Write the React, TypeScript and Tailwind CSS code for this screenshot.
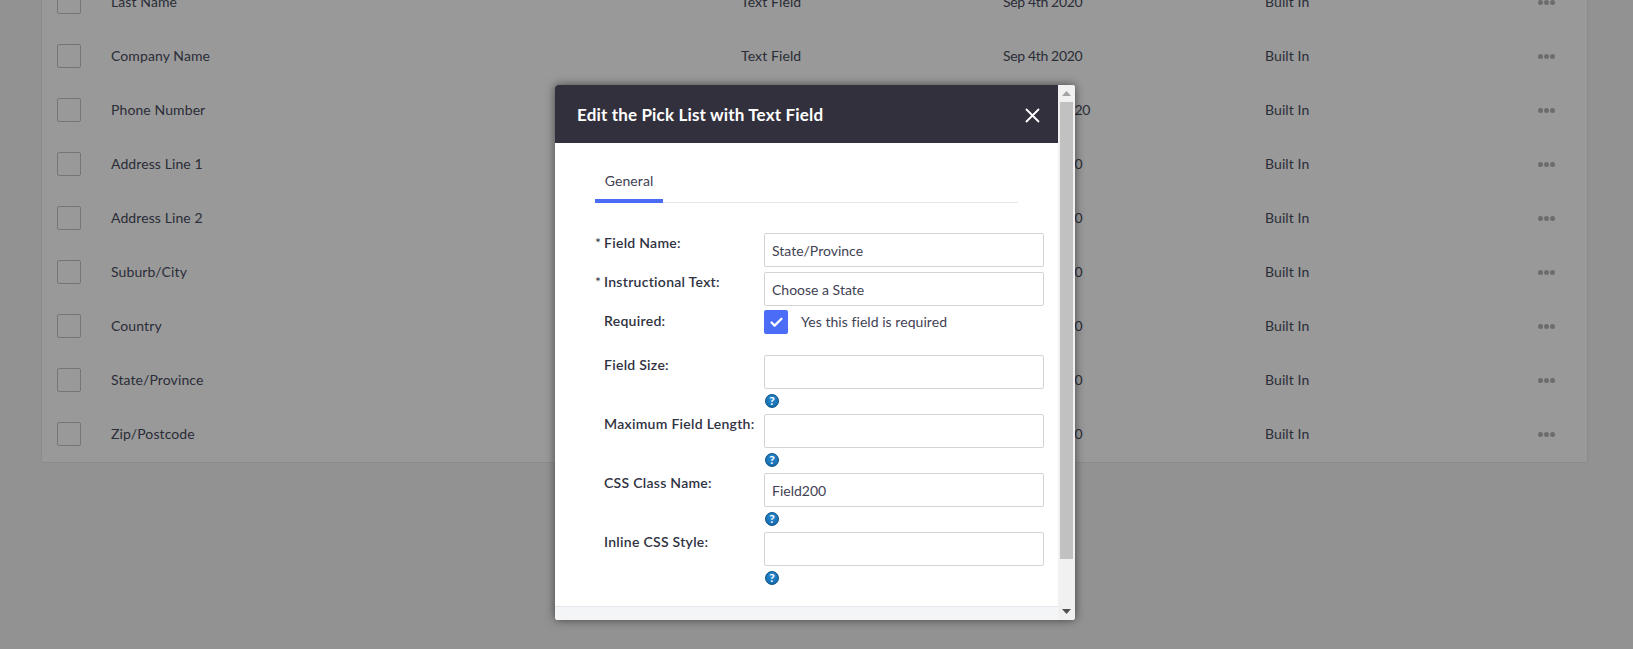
import { Check } from "lucide-react"

const rows = [
  { name: "Last Name", date: "Sep 4th 2020" },
  { name: "Company Name", date: "Sep 4th 2020" },
  { name: "Phone Number", date: "Sep 14th 2020" },
  { name: "Address Line 1", date: "Sep 4th 2020" },
  { name: "Address Line 2", date: "Sep 4th 2020" },
  { name: "Suburb/City", date: "Sep 4th 2020" },
  { name: "Country", date: "Sep 4th 2020" },
  { name: "State/Province", date: "Sep 4th 2020" },
  { name: "Zip/Postcode", date: "Sep 4th 2020" },
]

function TableRow({ name, date }: { name: string; date: string }) {
  return (
    <div className="grid h-[54px] grid-cols-[54px_630px_262px_262px_273px_1fr] items-center pl-[15px] text-[14px] tracking-[0.1px] text-[#484c5e]">
      <span className="h-6 w-6 rounded-[2px] border border-[#c4c4c8] bg-white" />
      <span className="pb-[2px]">{name}</span>
      <span className="pb-[2px]">Text Field</span>
      <span className="pb-[2px] tracking-[-0.35px]">{date}</span>
      <span className="pb-[2px]">Built In</span>
      <span className="flex gap-[1px]">
        <i className="h-[5px] w-[5px] rounded-full bg-[#b5b5b5]" />
        <i className="h-[5px] w-[5px] rounded-full bg-[#b5b5b5]" />
        <i className="h-[5px] w-[5px] rounded-full bg-[#b5b5b5]" />
      </span>
    </div>
  )
}

function Help() {
  return (
    <span className="mt-[5px] ml-px flex h-[14px] w-[14px] items-center justify-center rounded-full border border-[#0a5288] bg-[radial-gradient(circle_at_50%_35%,#2f8fd6,#0a5f9f)] text-[12px] leading-none font-bold text-white">
      ?
    </span>
  )
}

function Label({ text, star, offset }: { text: string; star?: boolean; offset?: string }) {
  return (
    <label className={`flex w-[169px] shrink-0 text-[14px] leading-5 font-semibold tracking-[0.28px] text-[#2f3242] ${offset ?? ""}`}>
      <span className="w-[9px] shrink-0 font-normal">{star ? "*" : ""}</span>
      {text}
    </label>
  )
}

function TextInput({ value }: { value?: string }) {
  return (
    <input
      readOnly
      defaultValue={value}
      className="block h-[34px] w-[280px] rounded-[2px] border border-[#d4d4d4] bg-white px-[7px] pt-px text-[14px] text-[#3f4254] outline-none"
    />
  )
}

function HelpField({ label, value }: { label: string; value?: string }) {
  return (
    <div className="flex">
      <Label text={label} />
      <div className="flex flex-col">
        <TextInput value={value} />
        <Help />
      </div>
    </div>
  )
}

function Scrollbar() {
  return (
    <div className="flex w-[17px] shrink-0 flex-col bg-[#f1f1f1]">
      <div className="flex h-[17px] items-center justify-center">
        <svg width="9" height="5" viewBox="0 0 9 5">
          <path d="M4.5 0L9 5H0z" fill="#a3a3a3" />
        </svg>
      </div>
      <div className="mx-[2px] h-[457px] bg-[#c1c1c1]" />
      <div className="flex-1" />
      <div className="flex h-[17px] items-center justify-center">
        <svg width="9" height="5" viewBox="0 0 9 5">
          <path d="M0 0h9L4.5 5z" fill="#505050" />
        </svg>
      </div>
    </div>
  )
}

export default function App() {
  return (
    <div className="relative h-[649px] overflow-hidden bg-[#f4f4f4] font-['Lato',sans-serif]">
      <div className="mx-[41px] mt-[-26px] w-[1547px] rounded-[2px] border border-[#e8e8ea] bg-white pb-px">
        {rows.map((r) => (
          <TableRow key={r.name} name={r.name} date={r.date} />
        ))}
      </div>

      {/* backdrop + modal */}
      <div className="absolute inset-0 bg-black/40">
        <div className="absolute top-[85px] left-[555px] flex h-[535px] w-[520px] overflow-hidden rounded-[3px] bg-white shadow-[0_0_10px_rgba(0,0,0,0.55)]">
          <div className="flex w-[503px] flex-col">
            <div className="flex h-[58px] shrink-0 items-center justify-between bg-[#33303e] pr-[18px] pl-[22px]">
              <h2 className="mt-px text-[17px] font-bold tracking-[0.16px] text-white">Edit the Pick List with Text Field</h2>
              <svg width="15" height="15" viewBox="0 0 15 15" className="mt-[2px]">
                <path d="M1 1l13 13M14 1L1 14" stroke="#fff" strokeWidth="1.8" />
              </svg>
            </div>

            <div className="flex-1 pl-[40px]">
              <div className="mt-[28px] w-[423px] border-b border-[#e4e6ee]">
                <div className="-mb-px w-[68px] border-b-4 border-[#4a6cf7] pb-[8px] text-center text-[14px] leading-5 tracking-[0.1px] text-[#3f4254]">
                  General
                </div>
              </div>

              <div className="mt-[30px] flex flex-col">
                <div className="flex">
                  <Label text="Field Name:" star />
                  <TextInput value="State/Province" />
                </div>
                <div className="mt-[5px] flex">
                  <Label text="Instructional Text:" star />
                  <TextInput value="Choose a State" />
                </div>
                <div className="mt-[4px] flex items-center">
                  <Label text="Required:" offset="-mt-[2px]" />
                  <span className="flex h-6 w-6 items-center justify-center rounded-[2px] bg-[#4a6cf7]">
                    <Check size={15} strokeWidth={3.6} className="text-white" />
                  </span>
                  <span className="ml-[13px] -mt-[1px] text-[14px] tracking-[0.05px] text-[#3f4254]">Yes this field is required</span>
                </div>
                <div className="mt-[21px] flex flex-col gap-[6px]">
                  <HelpField label="Field Size:" />
                  <HelpField label="Maximum Field Length:" />
                  <HelpField label="CSS Class Name:" value="Field200" />
                  <HelpField label="Inline CSS Style:" />
                </div>
              </div>
            </div>

            <div className="h-[14px] shrink-0 border-t border-[#e3e5ea] bg-[#f4f5f7]" />
          </div>
          <Scrollbar />
        </div>
      </div>
    </div>
  )
}
